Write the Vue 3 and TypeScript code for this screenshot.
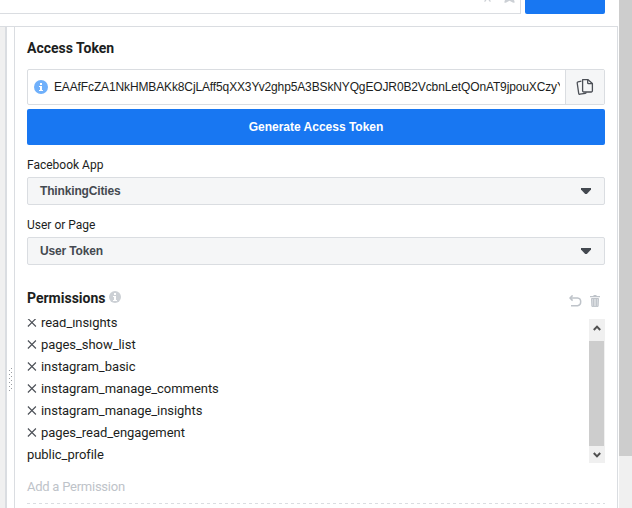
<script setup lang="ts">
import { ref } from 'vue'

interface Selector {
  label: string
  value: string
}

interface Permission {
  name: string
  removable: boolean
}

const token = 'EAAfFcZA1NkHMBAKk8CjLAff5qXX3Yv2ghp5A3BSkNYQgEOJR0B2VcbnLetQOnAT9jpouXCzyY'

const selectors: Selector[] = [
  { label: 'Facebook App', value: 'ThinkingCities' },
  { label: 'User or Page', value: 'User Token' },
]

const permissions = ref<Permission[]>([
  { name: 'read_insights', removable: true },
  { name: 'pages_show_list', removable: true },
  { name: 'instagram_basic', removable: true },
  { name: 'instagram_manage_comments', removable: true },
  { name: 'instagram_manage_insights', removable: true },
  { name: 'pages_read_engagement', removable: true },
  { name: 'public_profile', removable: false },
])

function remove(name: string): void {
  permissions.value = permissions.value.filter((p) => p.name !== name)
}
</script>

<template>
  <div class="page">
    <div class="main">
      <header class="topbar">
        <div class="query">
          <svg class="query-icons" width="34" height="4" viewBox="0 0 34 4">
            <path d="M1.5 1.5 3 0M6 0l1.5 1.5" fill="none" stroke="#ccd0d5" stroke-width="1.2" />
            <path d="M22 0h9l.8 2.6-1.6.2L26.5.8l-3.7 2-1.6-.2z" fill="#ccd0d5" />
          </svg>
        </div>
        <div class="submit"></div>
      </header>
      <div class="content">
        <div class="rail"></div>
        <div class="gutter">
          <svg width="4" height="24" viewBox="0 0 4 24" fill="#999ca1">
            <template v-for="i in 6" :key="i">
              <rect x="2" :y="(i - 1) * 4" width="1" height="1" />
              <rect x="0" :y="(i - 1) * 4 + 2" width="1" height="1" />
            </template>
          </svg>
        </div>
        <main class="panel">
          <h2 class="title">Access Token</h2>
          <div class="token">
            <svg class="token-info" width="14" height="14" viewBox="0 0 14 14">
              <circle cx="7" cy="7" r="7" fill="#6fb0fb" />
              <path d="M6 3h2v2H6zM5 6h3v4h1v1H5v-1h1V7H5z" fill="#fff" />
            </svg>
            <div class="token-value"><span>{{ token }}</span></div>
            <button class="copy" aria-label="Copy">
              <svg width="18" height="18" viewBox="0 0 18 18" fill="none" stroke="#4b4f56" stroke-width="1.3" stroke-linejoin="round">
                <path d="M6.6 1.6h5.2l4.6 4v7.2a1.2 1.2 0 0 1-1.2 1.2H7.8a1.2 1.2 0 0 1-1.2-1.2z" />
                <path d="M11.7 1.8v3.1q0 .8.8.8h3.7" />
                <path d="M5.4 3.2 2 3.8q-1 .2-.8 1.2l1.5 10.4q.2 1 1.2.8l5.4-.9q.8-.1.9-.9" />
              </svg>
            </button>
          </div>
          <button class="generate"><span>Generate Access Token</span></button>

          <div v-for="s in selectors" :key="s.label" class="field">
            <label class="label"><span>{{ s.label }}</span></label>
            <div class="select">
              <span>{{ s.value }}</span>
              <svg width="10" height="6" viewBox="0 0 10 6"><path d="M0 0h10v1.6L5.8 6H4.2L0 1.6z" fill="#444950" /></svg>
            </div>
          </div>

          <div class="perm-head">
            <h2 class="title">Permissions</h2>
            <svg class="perm-info" width="12" height="12" viewBox="0 0 12 12">
              <circle cx="6" cy="6" r="6" fill="#ccd0d5" />
              <path d="M5 2h2v2H5zM4 5h3v4h1v1H4V9h1V6H4z" fill="#fff" />
            </svg>
            <svg class="undo" width="13" height="12" viewBox="0 0 13 12" fill="none" stroke="#bec3c9" stroke-width="1.5">
              <path d="M1 3h7.5q3.2.2 3.2 3.8t-3.2 3.9H2" />
              <path d="M3.6.4 1 3l2.6 2.6" />
            </svg>
            <svg width="10" height="12" viewBox="0 0 10 12">
              <path d="M3.5 0h3v1H10v1.3H0V1h3.5z" fill="#bec3c9" />
              <path d="M1.5 3.5h7l-.4 7.9H1.9z" fill="#dadde1" stroke="#bec3c9" />
              <path d="M3.6 4v7M6.4 4v7" stroke="#bec3c9" />
            </svg>
          </div>

          <div class="perm-box">
            <ul class="perms">
              <li v-for="p in permissions" :key="p.name">
                <svg v-if="p.removable" width="10" height="9" viewBox="0 0 10 9" @click="remove(p.name)">
                  <path d="M.9.5l8 8M8.9.5l-8 8" stroke="#4b4f56" stroke-width="1.1" />
                </svg>
                <span>{{ p.name }}</span>
              </li>
            </ul>
            <div class="scroll">
              <svg width="8" height="6" viewBox="0 0 8 6"><path d="M.8 5 4 1.6 7.2 5" fill="none" stroke="#505050" stroke-width="2" /></svg>
              <div class="scroll-thumb"></div>
              <svg width="8" height="6" viewBox="0 0 8 6"><path d="M.8 1 4 4.4 7.2 1" fill="none" stroke="#505050" stroke-width="2" /></svg>
            </div>
          </div>
          <div class="add"><span>Add a Permission</span></div>
          <div class="divider"></div>
        </main>
      </div>
    </div>
    <div class="page-scroll"><div class="page-thumb"></div></div>
  </div>
</template>

<style>
body {
  overflow: hidden;
  background: #fff;
}
</style>

<style scoped>
* {
  box-sizing: border-box;
}
.page {
  display: flex;
  width: 632px;
  height: 508px;
  overflow: hidden;
  font-family: Roboto, "Liberation Sans", sans-serif;
  color: #1c1e21;
}
.main {
  display: flex;
  flex-direction: column;
  width: 619px;
}
.topbar {
  display: flex;
  gap: 4px;
  height: 27px;
  width: 618px;
  border-bottom: 1px solid #dadde1;
}
.query {
  display: flex;
  justify-content: flex-end;
  width: 521px;
  height: 14px;
  padding-right: 3px;
  border: solid #dadde1;
  border-width: 0 1px 1px 0;
}
.submit {
  width: 80px;
  height: 14px;
  background: #1877f2;
  border-radius: 0 0 2px 2px;
}
.content {
  display: flex;
  height: 481px;
}
.rail {
  width: 7px;
  background: #f0f0f0;
  border-right: 2px solid #dadde1;
}
.gutter {
  display: flex;
  width: 7px;
  padding: 341px 0 0 2px;
}
.panel {
  width: 604px;
  padding: 9px 12px 0;
  border: solid #dadde1;
  border-width: 0 1px;
}
.title {
  margin: 0;
  font-size: 14px;
  line-height: 24px;
  font-weight: 700;
}
.token {
  display: flex;
  align-items: center;
  height: 36px;
  margin-top: 9px;
  padding-left: 6px;
  border: 1px solid #dadde1;
  border-radius: 2px;
}
.token-value {
  width: 506px;
  margin-left: 6px;
  overflow: hidden;
  white-space: nowrap;
  font: 12px/34px "Liberation Sans", Arial, sans-serif;
  letter-spacing: -0.13px;
}
.copy {
  display: flex;
  align-items: center;
  justify-content: center;
  width: 39px;
  height: 34px;
  margin-left: auto;
  padding: 0;
  border: 0;
  border-left: 1px solid #dadde1;
  background: #f5f6f7;
}
.generate {
  display: block;
  width: 578px;
  height: 36px;
  margin: 4px 0 8px;
  padding: 0;
  border: 0;
  border-radius: 2px;
  background: #1877f2;
  color: #fff;
  font: 700 12px/36px "Liberation Sans", Arial, sans-serif;
}
.field {
  height: 60px;
}
.label {
  display: block;
  height: 24px;
  font-size: 12px;
  line-height: 24px;
}
.select {
  display: flex;
  align-items: center;
  justify-content: space-between;
  height: 28px;
  padding: 0 13px 0 12px;
  border: 1px solid #dadde1;
  border-radius: 2px;
  background: #f5f6f7;
  color: #444950;
  font: 700 12px/26px "Liberation Sans", Arial, sans-serif;
  letter-spacing: -0.15px;
}
.perm-head {
  display: flex;
  align-items: center;
  height: 24px;
  margin-top: 13px;
  padding-right: 5px;
}
.perm-info {
  margin: -2px 0 0 4px;
}
.undo {
  margin: 5px 8px 0 auto;
}
.undo + svg {
  margin-top: 5px;
}
.perm-box {
  display: flex;
  justify-content: space-between;
  height: 144px;
  margin-top: 9px;
  overflow: hidden;
}
.perms {
  margin: -7px 0 0;
  padding: 0;
  list-style: none;
}
.perms li {
  display: flex;
  align-items: center;
  gap: 4px;
  height: 22px;
  font-size: 13px;
  line-height: 22px;
  letter-spacing: -0.05px;
}
.perms svg {
  margin-top: -2px;
}
.scroll {
  display: flex;
  flex-direction: column;
  align-items: center;
  width: 16px;
  height: 144px;
  padding: 6px 0 5px;
  background: #f0f0f0;
}
.scroll-thumb {
  width: 15px;
  height: 105px;
  margin: 10px 1px 6px 0;
  background: #cdcdcd;
}
.add {
  height: 24px;
  margin-top: 12px;
  font-size: 13px;
  line-height: 24px;
  letter-spacing: -0.25px;
  color: #bec3c9;
}
.divider {
  height: 1px;
  margin-top: 4px;
  background: repeating-linear-gradient(90deg, #dadde1 0 3px, transparent 3px 6px);
}
.page-scroll {
  width: 13px;
  background: #f0f0f0;
}
.page-thumb {
  height: 456px;
  background: #cdcdcd;
}
</style>
